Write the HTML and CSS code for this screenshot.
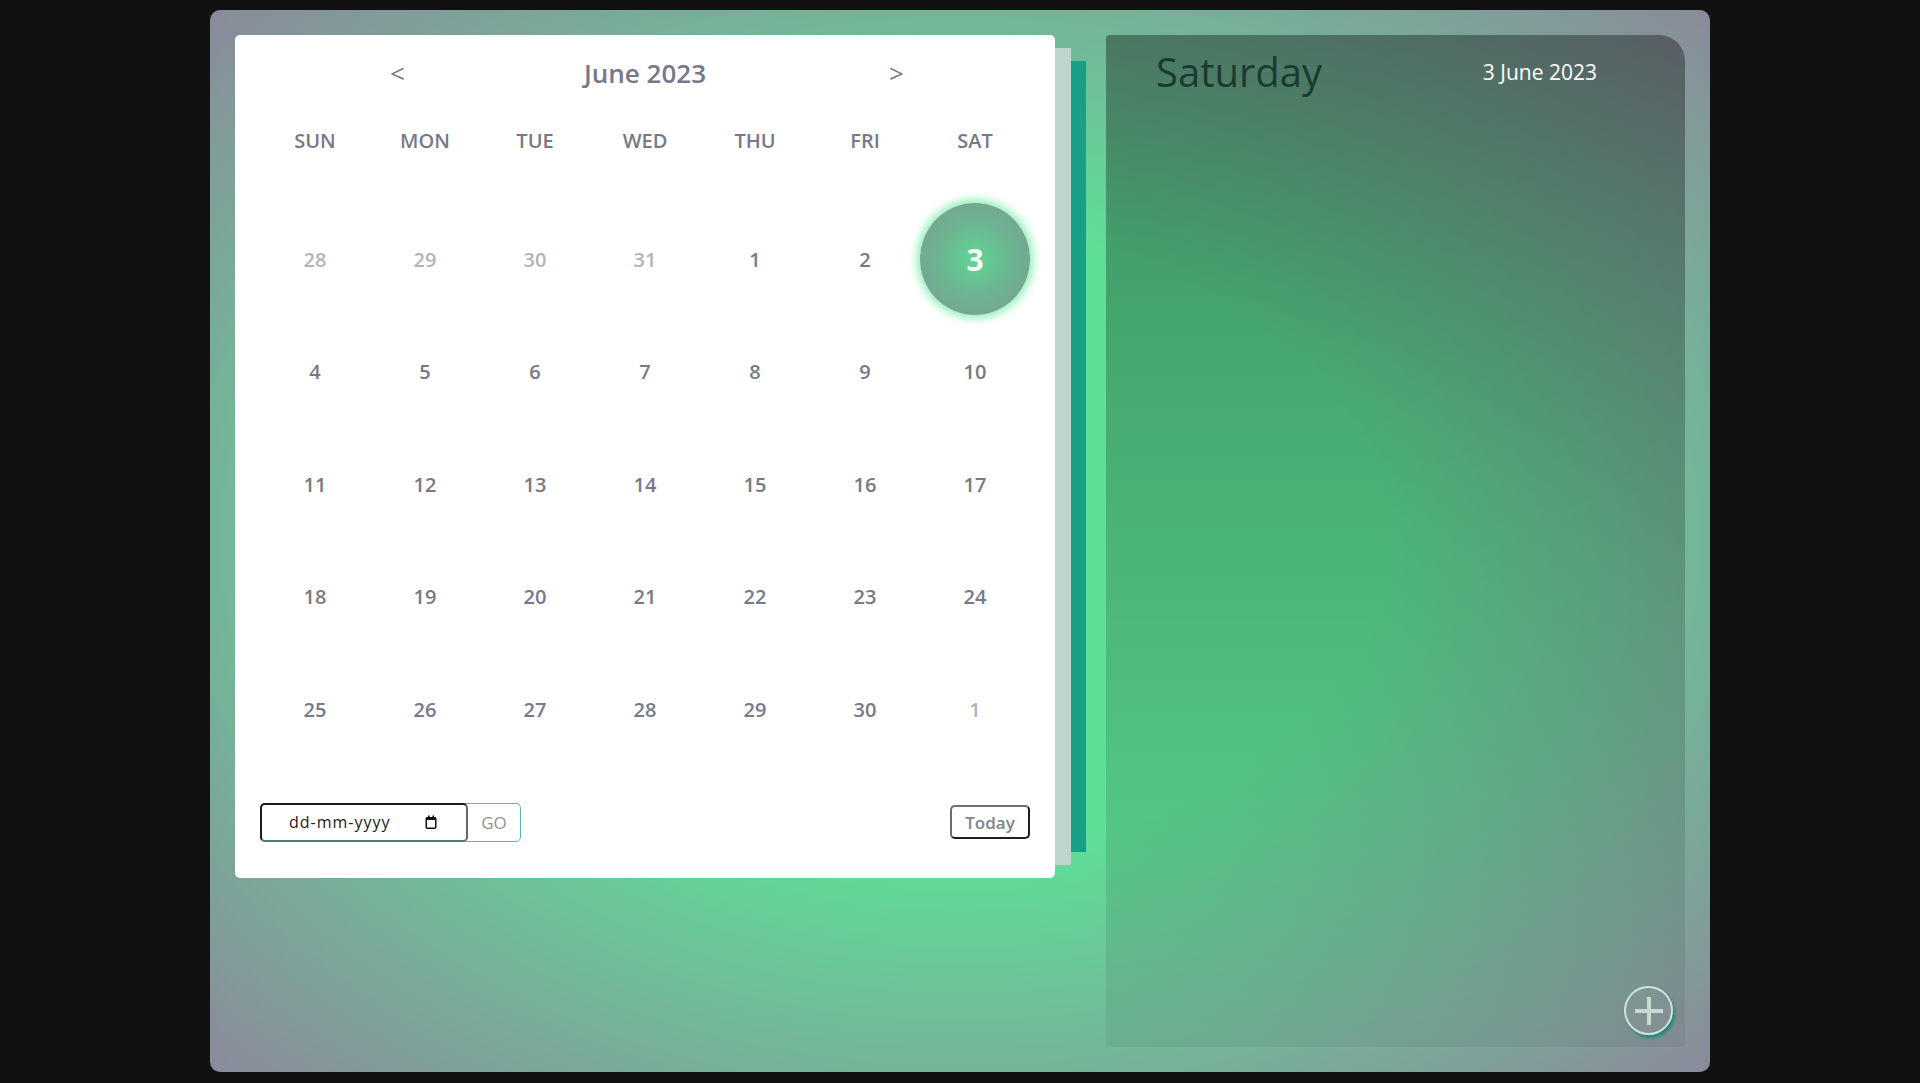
FILE: index.html
```html
<!DOCTYPE html>
<html lang="en">
<head>
<meta charset="utf-8">
<title>Calendar</title>
<link rel="stylesheet" href="styles.css">
</head>
<body>
<div class="app">
  <section class="calendar">
    <div class="cal-head">
      <span class="nav prev">&lt;</span>
      <span class="month">June 2023</span>
      <span class="nav next">&gt;</span>
    </div>
    <div class="weekdays">
      <span>SUN</span><span>MON</span><span>TUE</span><span>WED</span><span>THU</span><span>FRI</span><span>SAT</span>
    </div>
    <div class="days">
      <span class="day other">28</span><span class="day other">29</span><span class="day other">30</span><span class="day other">31</span><span class="day">1</span><span class="day">2</span><span class="day active">3</span>
      <span class="day">4</span><span class="day">5</span><span class="day">6</span><span class="day">7</span><span class="day">8</span><span class="day">9</span><span class="day">10</span>
      <span class="day">11</span><span class="day">12</span><span class="day">13</span><span class="day">14</span><span class="day">15</span><span class="day">16</span><span class="day">17</span>
      <span class="day">18</span><span class="day">19</span><span class="day">20</span><span class="day">21</span><span class="day">22</span><span class="day">23</span><span class="day">24</span>
      <span class="day">25</span><span class="day">26</span><span class="day">27</span><span class="day">28</span><span class="day">29</span><span class="day">30</span><span class="day other">1</span>
    </div>
    <div class="cal-foot">
      <div class="goto">
        <div class="date-input">
          <span class="placeholder">dd-mm-yyyy</span>
          <svg class="cal-icon" width="12" height="14" viewBox="0 0 12 14">
            <rect x="1.25" y="2.75" width="9.5" height="10.5" rx="1" fill="none" stroke="#111" stroke-width="1.5"/>
            <rect x="1" y="2" width="10" height="3" rx="1" fill="#111"/>
            <rect x="3" y="0.5" width="1.6" height="2.5" fill="#111"/>
            <rect x="7.4" y="0.5" width="1.6" height="2.5" fill="#111"/>
          </svg>
        </div>
        <button class="go">GO</button>
      </div>
      <button class="today">Today</button>
    </div>
  </section>
  <section class="events">
    <header class="events-head">
      <span class="day-name">Saturday</span>
      <span class="day-date">3 June 2023</span>
    </header>
    <button class="add" aria-label="Add event">
      <svg width="28" height="28" viewBox="0 0 28 28">
        <line x1="14" y1="0" x2="14" y2="28" stroke="#c9d8d2" stroke-width="4"/>
        <line x1="0" y1="14" x2="28" y2="14" stroke="#c9d8d2" stroke-width="4"/>
      </svg>
    </button>
  </section>
</div>
</body>
</html>
```
FILE: styles.css
```css
html, body {
  margin: 0;
  background: #111111;
}

body {
  padding-top: 10px;
  font-family: "Open Sans", "Noto Sans", sans-serif;
}

.app {
  width: 1500px;
  height: 1062px;
  margin: 0 auto;
  box-sizing: border-box;
  padding: 25px;
  display: flex;
  align-items: flex-start;
  gap: 51px;
  border-radius: 10px;
  background: radial-gradient(ellipse farthest-corner at 50% 50%, #5de096 40%, #8a8a9a 100%);
}

/* ---------- calendar card ---------- */
.calendar {
  flex: 0 0 820px;
  box-sizing: border-box;
  background: #ffffff;
  border-radius: 5px;
  padding: 20px 25px 36px;
  box-shadow: 29px 0 0 -13px #bdd5ca, 57px 0 0 -26px #17a085;
  color: #777988;
}

.cal-head {
  height: 36px;
  display: flex;
  align-items: center;
  justify-content: center;
  padding-left: 4px;
}

.nav {
  font-size: 26px;
  line-height: 36px;
  font-weight: 400;
}

.prev {
  margin-right: 179px;
}

.next {
  margin-left: 183px;
}

.month {
  font-size: 26px;
  line-height: 36px;
  font-weight: 600;
}

.weekdays {
  margin-top: 34.5px;
  height: 30px;
  display: grid;
  grid-template-columns: repeat(7, 110px);
  align-items: center;
  justify-items: center;
  font-size: 20px;
  font-weight: 600;
  line-height: 30px;
}

.days {
  margin-top: 47.2px;
  display: grid;
  grid-template-columns: repeat(7, 110px);
  grid-auto-rows: 112.65px;
}

.day {
  display: flex;
  align-items: center;
  justify-content: center;
  font-size: 20px;
  font-weight: 600;
  color: #777988;
}

.day.other {
  color: #b3b3b8;
}

.day.active {
  border-radius: 50%;
  background: radial-gradient(circle, #5ed794 0%, #6cb490 45%, #7c9c90 100%);
  box-shadow: 0 0 10px 3px #86efb4;
  color: #ffffff;
  font-size: 30px;
  font-weight: 700;
}

.cal-foot {
  margin-top: 37px;
  height: 39px;
  display: flex;
  align-items: center;
  justify-content: space-between;
}

.goto {
  display: flex;
  height: 39px;
  box-sizing: border-box;
  border: 1px solid #5db8a2;
  border-radius: 5px;
}

.date-input {
  width: 208px;
  margin: -1px 0 -1px -1px;
  box-sizing: border-box;
  display: flex;
  align-items: center;
  padding: 0 29px 0 27px;
  border: 2px solid;
  border-color: #1b1b1b #666666 #4f7e71 #1b1b1b;
  border-radius: 5px;
  background: #ffffff;
}

.placeholder {
  font-size: 16px;
  letter-spacing: 1px;
  color: #1a1a1a;
}

.cal-icon {
  margin-left: auto;
  display: block;
}

.go {
  width: 52px;
  padding: 0;
  border: none;
  background: transparent;
  font-family: "Open Sans", sans-serif;
  font-size: 17px;
  color: #929292;
}

.today {
  width: 80px;
  height: 34px;
  box-sizing: border-box;
  padding: 0;
  border: 2px solid;
  border-color: #6e6e6e #1e1e1e #1e1e1e #6e6e6e;
  border-radius: 5px;
  background: #ffffff;
  font-family: "Open Sans", sans-serif;
  font-size: 17px;
  font-weight: 600;
  color: #808291;
}

/* ---------- events panel ---------- */
.events {
  flex: 0 0 579px;
  height: 1012px;
  position: relative;
  border-radius: 4px 26px 0 0;
  background: linear-gradient(180deg, rgba(0, 0, 0, 0.35) 0%, rgba(0, 0, 0, 0.05) 100%);
}

.events-head {
  height: 73px;
  display: flex;
  align-items: center;
  justify-content: space-between;
  padding: 0 88px 0 50px;
}

.day-name {
  font-size: 40px;
  font-weight: 400;
  color: #1b3a31;
}

.day-date {
  font-size: 21px;
  font-weight: 400;
  color: #ffffff;
}

.add {
  position: absolute;
  right: 12px;
  bottom: 12px;
  width: 49px;
  height: 49px;
  box-sizing: border-box;
  padding: 0;
  border: 2px solid rgba(225, 238, 232, 0.85);
  border-radius: 50%;
  background: rgba(255, 255, 255, 0.04);
  box-shadow: 2px 3px 3px rgba(18, 140, 118, 0.85);
  display: flex;
  align-items: center;
  justify-content: center;
}

.add svg {
  display: block;
}
```
